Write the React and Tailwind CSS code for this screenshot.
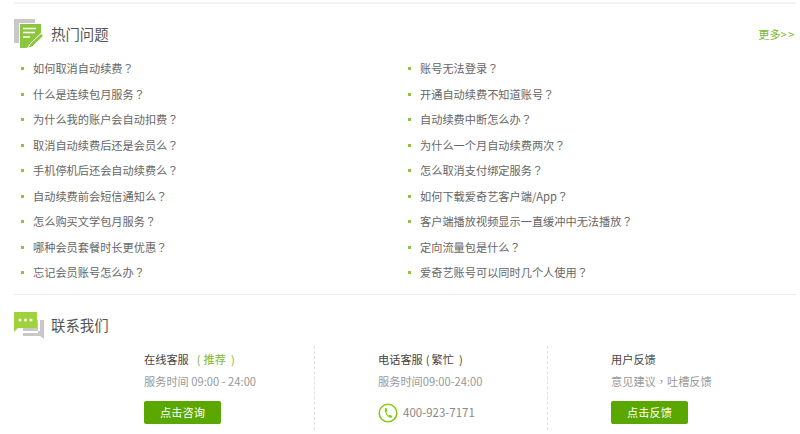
const leftQuestions = [
  "如何取消自动续费",
  "什么是连续包月服务",
  "为什么我的账户会自动扣费",
  "取消自动续费后还是会员么",
  "手机停机后还会自动续费么",
  "自动续费前会短信通知么",
  "怎么购买文学包月服务",
  "哪种会员套餐时长更优惠",
  "忘记会员账号怎么办",
];

const rightQuestions = [
  "账号无法登录",
  "开通自动续费不知道账号",
  "自动续费中断怎么办",
  "为什么一个月自动续费两次",
  "怎么取消支付绑定服务",
  "如何下载爱奇艺客户端/App",
  "客户端播放视频显示一直缓冲中无法播放",
  "定向流量包是什么",
  "爱奇艺账号可以同时几个人使用",
];

// TC font centres full-width punctuation, as the reference does
function Punct({ children }) {
  return <span className="font-['Noto_Sans_CJK_TC',sans-serif]">{children}</span>;
}

function QuestionList({ items }) {
  return (
    <ul className="flex flex-col">
      {items.map((q) => (
        <li key={q} className="flex items-center h-[25.5px] text-[11.2px] text-[#666666]">
          <span className="w-[3px] h-[3px] bg-[#8cc63f] mr-[9px]" />
          <a>
            {q}
            <Punct>？</Punct>
          </a>
        </li>
      ))}
    </ul>
  );
}

function EditIcon() {
  return (
    <svg width="30" height="30" viewBox="0 0 30 30" className="shrink-0 -mt-[1px]">
      <path d="M0 0H21V4H5V24H0Z" fill="#c8c8c8" />
      <path d="M6 5H27V16L15 28L12 29H6Z" fill="#8cc63f" />
      <path d="M9 9.500H22M9 13.500H21M9 18H16" stroke="#fff" strokeWidth="1.400" />
      <path d="M16 25L27 14.500L29.500 17L18 28L13.500 29.500Z" fill="#8cc63f" stroke="#fff" strokeWidth="1" />
    </svg>
  );
}

function ChatIcon() {
  return (
    <svg width="30" height="28" viewBox="0 0 30 28" className="shrink-0 mt-[2px]">
      <path d="M9 8H30V27L26 24H9Z" fill="#c8c8c8" />
      <path d="M24 8H26V19H9V21H24Z" fill="#fff" />
      <path d="M0 0H23V16H4L0 20Z" fill="#a0d33a" />
      <circle cx="6" cy="8" r="1.500" fill="#fff" />
      <circle cx="11.500" cy="8" r="1.500" fill="#fff" />
      <circle cx="17" cy="8" r="1.500" fill="#fff" />
    </svg>
  );
}

function PhoneIcon() {
  return (
    <svg width="20" height="20" viewBox="0 0 20 20" className="shrink-0">
      <circle cx="10" cy="10" r="8.800" fill="none" stroke="#84cc16" strokeWidth="1.600" />
      <path
        d="M7 5L8.800 5.200L9.300 8L8.300 9C8.600 10.600 9.500 11.800 10.800 12.600L12 11.800L14.300 13.200L13.600 14.800C10.500 15.300 6 11 7 5Z"
        fill="#84cc16"
      />
    </svg>
  );
}

function GreenButton({ children }) {
  return (
    <button className="block w-[77px] h-[23px] rounded-[2px] bg-[#5aa700] text-white text-[11.2px] leading-[23px] text-center">
      {children}
    </button>
  );
}

export default function App() {
  return (
    <div className="w-[800px] h-[434px] overflow-hidden bg-white pt-[2px] pl-[14px] pr-[4px] font-['Noto_Sans_CJK_SC','Liberation_Sans',sans-serif]">
      <div className="border-t-2 border-[#f3f3f3] pt-[15px]">
        <div className="flex items-center h-[30px]">
          <EditIcon />
          <h2 className="ml-[7px] text-[14.4px] text-[#555555]">热门问题</h2>
          <a className="ml-auto text-[11.2px] text-[#7cb82f]">
            更多<span className="tracking-[1.500px]">&gt;&gt;</span>
          </a>
        </div>
        <div className="grid grid-cols-[387px_1fr] mt-[7px] pl-[7px]">
          <QuestionList items={leftQuestions} />
          <QuestionList items={rightQuestions} />
        </div>
      </div>

      <div className="border-t border-[#ececec] mt-[8px] pt-[16px]">
        <div className="flex items-center h-[28px]">
          <ChatIcon />
          <h2 className="ml-[7px] text-[14.4px] text-[#555555]">联系我们</h2>
        </div>
        <div className="flex mt-[7px] h-[84px]">
          <div className="w-[300px] pl-[130px] pt-[4px]">
            <p className="text-[11.2px] leading-[18px] text-[#444444]">
              在线客服
              <span className="text-[#7cb82f]">
                <span className="ml-[8px]">(</span>
                <span className="ml-[3px]">推荐</span>
                <span className="ml-[5px]">)</span>
              </span>
            </p>
            <p className="mt-[4px] mb-[11px] text-[11.2px] leading-[18px] text-[#999999]">服务时间 09:00 - 24:00</p>
            <GreenButton>点击咨询</GreenButton>
          </div>
          <div className="w-[233px] pl-[63px] pt-[4px] border-l border-dashed border-[#e0e0e0]">
            <p className="text-[11.2px] leading-[18px] text-[#444444]">
              电话客服
              <span className="ml-[3px]">(</span>
              <span className="ml-[2px]">繁忙</span>
              <span className="ml-[5px]">)</span>
            </p>
            <p className="mt-[4px] mb-[13px] text-[11.2px] leading-[18px] text-[#999999]">服务时间09:00-24:00</p>
            <div className="flex items-center gap-[5px] text-[11.5px] text-[#888888]">
              <PhoneIcon />
              <span>400-923-7171</span>
            </div>
          </div>
          <div className="flex-1 pl-[63px] pt-[4px] border-l border-dashed border-[#e0e0e0]">
            <p className="text-[11.2px] leading-[18px] text-[#444444]">用户反馈</p>
            <p className="mt-[4px] mb-[11px] text-[11.2px] leading-[18px] text-[#999999]">
              意见建议<Punct>，</Punct>吐槽反馈
            </p>
            <GreenButton>点击反馈</GreenButton>
          </div>
        </div>
      </div>
    </div>
  );
}
